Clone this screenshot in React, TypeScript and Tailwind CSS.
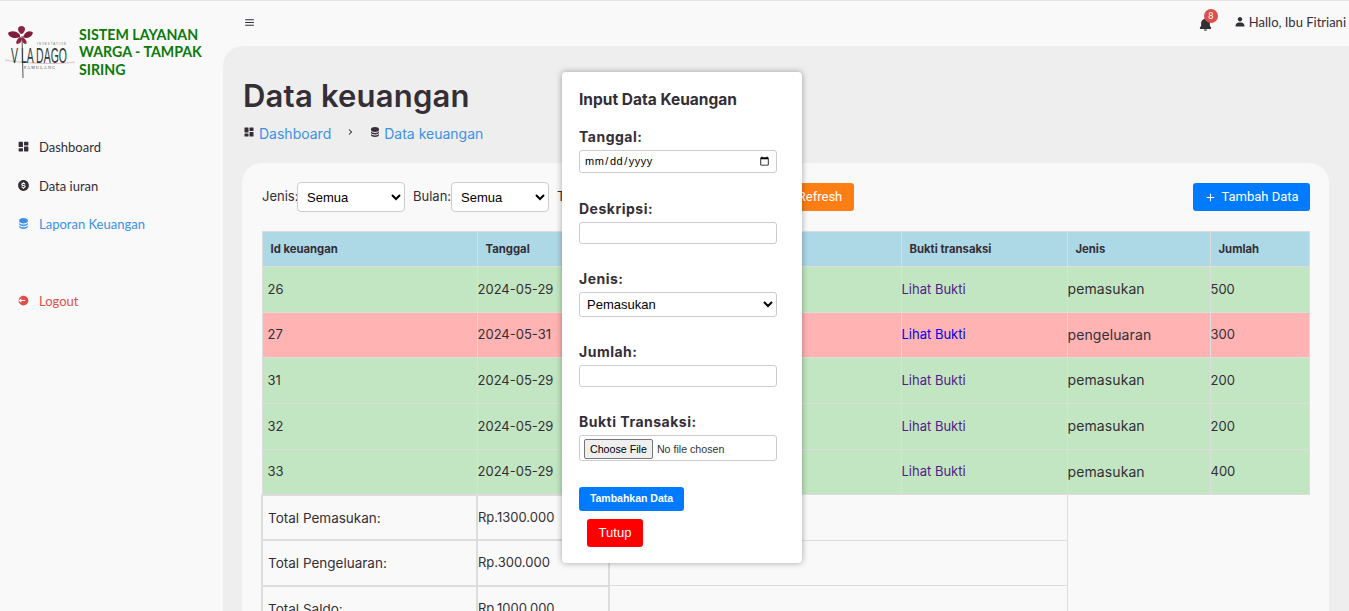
import React from 'react';
import {
  BiMenu,
  BiPlus,
  BiChevronRight,
  BiSolidBell,
  BiSolidData,
  BiSolidDashboard,
  BiSolidDollarCircle,
  BiSolidLogOutCircle,
  BiSolidUser,
} from 'react-icons/bi';

const rows = [
  { id: 26, date: '2024-05-29', type: 'pemasukan', amount: 500 },
  { id: 27, date: '2024-05-31', type: 'pengeluaran', amount: 300 },
  { id: 31, date: '2024-05-29', type: 'pemasukan', amount: 200 },
  { id: 32, date: '2024-05-29', type: 'pemasukan', amount: 200 },
  { id: 33, date: '2024-05-29', type: 'pemasukan', amount: 400 },
];

const totals = [
  { label: 'Total Pemasukan:', value: 'Rp.1300.000' },
  { label: 'Total Pengeluaran:', value: 'Rp.300.000' },
  { label: 'Total Saldo:', value: 'Rp.1000.000' },
];

const heads = ['Id keuangan', 'Tanggal', 'Deskripsi', 'Bukti transaksi', 'Jenis', 'Jumlah'];

function Logo() {
  return (
    <svg width="71" height="56" viewBox="0 0 71 56" className="shrink-0">
      <path d="M17 12 L18 54" stroke="#55504f" strokeWidth="1" />
      <path d="M15 11 C11 6 5 7 3 9 C4 14 10 15 15 13 Z" fill="#7d1f3c" />
      <path d="M19 11 C22 6 27 7 28 9 C26 14 21 15 18 13 Z" fill="#7d1f3c" />
      <path d="M13 5 C13 1 20 1 20 5 C20 8 17 10 16.500 10 C16 10 13 8 13 5 Z" fill="#8c2443" />
      <path d="M15 13 C12 15 10 19 12 20 C15 20 17 17 17 14 Z" fill="#8c2443" />
      <path d="M18 13 C20 15 23 18 21 20 C18 20 17 17 17 14 Z" fill="#8c2443" />
      <path d="M0 36 C15 39 50 41 70 38" stroke="#c9a3a8" strokeWidth="0.7" fill="none" />
      <text x="32" y="21" fontSize="3" fill="#777" textLength="29" fontFamily="Liberation Sans">INVESTATION</text>
      <text x="6" y="39" fontSize="22" fill="#2f3b3d" textLength="56" lengthAdjust="spacingAndGlyphs" fontFamily="Liberation Sans">V LA DAGO</text>
      <text x="19" y="45" fontSize="4" fill="#444" textLength="31" fontFamily="Liberation Serif">PAMULANG</text>
    </svg>
  );
}

function Field({ label, gap, children }: { label: string; gap: string; children: React.ReactNode }) {
  return (
    <div className={gap}>
      <label className="block h-[20px] mb-[4px] text-[14px] leading-[22px] font-bold tracking-[0.5px]">{label}</label>
      {children}
    </div>
  );
}

const inputClass = 'block w-[198px] rounded-[3px] border border-[#ccc] bg-white';

export default function App() {
  return (
    <div className="relative flex h-screen overflow-hidden border-t border-[#e3e3e3] bg-[#f9f9f9] text-[#342e37] font-['Inter',sans-serif]">
      {/* sidebar */}
      <aside className="w-[223px] shrink-0 font-['Lato',sans-serif]">
        <div className="flex items-start pl-[5px] pr-[4px] pt-[23px]">
          <Logo />
          <div className="pl-[3px] pt-[2px] text-[14.2px] leading-[17.3px] font-bold text-[#0a7a0a]">
            SISTEM LAYANAN
            <br />
            WARGA - TAMPAK
            <br />
            SIRING
          </div>
        </div>
        <ul className="mt-[58px] pl-[17px] text-[13px]">
          <li className="flex h-[20px] items-center gap-[9px]">
            <BiSolidDashboard className="-mt-[3px] h-[13px] w-[13px]" /> Dashboard
          </li>
          <li className="mt-[19px] flex h-[20px] items-center gap-[9px]">
            <BiSolidDollarCircle className="-mt-[3px] h-[13px] w-[13px]" /> Data iuran
          </li>
          <li className="mt-[18px] flex h-[20px] items-center gap-[9px] text-[#3c91e6]">
            <BiSolidData className="-mt-[3px] h-[13px] w-[13px]" /> Laporan Keuangan
          </li>
          <li className="mt-[57px] flex h-[20px] items-center gap-[9px] text-[#db504a]">
            <BiSolidLogOutCircle className="-mt-[3px] h-[13px] w-[13px]" /> Logout
          </li>
        </ul>
      </aside>

      <div className="flex min-w-0 flex-1 flex-col">
        {/* top nav */}
        <nav className="flex h-[45px] shrink-0 items-center pb-[2px] pl-[20px] pr-[3px] font-['Lato',sans-serif] text-[13px]">
          <BiMenu className="h-[13px] w-[13px]" />
          <div className="relative ml-auto mr-[21px] mt-[3px]">
            <BiSolidBell className="h-[15px] w-[15px]" />
            <span className="absolute -right-[5px] -top-[8px] flex h-[14px] w-[14px] items-center justify-center rounded-full bg-[#db504a] text-[9px] text-white">
              8
            </span>
          </div>
          <BiSolidUser className="-mt-[2px] mr-[3px] h-[12px] w-[12px]" />
          <span>Hallo, Ibu Fitriani</span>
        </nav>

        {/* main */}
        <main className="flex-1 rounded-tl-[20px] bg-[#eee] pl-[19px] pr-[20px] pt-[30px]">
          <h1 className="ml-[1px] text-[31px] leading-[40px] font-semibold tracking-[0.2px]">Data keuangan</h1>
          <div className="ml-[1px] mt-[7px] flex h-[20px] items-center text-[14px] text-[#3c91e6]">
            <BiSolidDashboard className="-mt-[2px] mr-[4px] h-[12px] w-[12px] text-[#342e37]" />
            Dashboard
            <BiChevronRight className="mx-[13px] -mt-[2px] h-[12px] w-[12px] text-[#342e37]" />
            <BiSolidData className="-mt-[2px] mr-[3px] h-[12px] w-[12px] text-[#342e37]" />
            Data keuangan
          </div>

          <div className="mt-[20px] rounded-[20px] bg-[#f9f9f9] pl-[19px] pr-[19px] pt-[19px] pb-[24px]">
            <div className="flex h-[30px] items-center text-[13px]">
              <span className="ml-[1px] w-[35px]">Jenis:</span>
              <select className="h-[30px] w-[108px] rounded-[4px] border border-[#ccc] bg-white pl-[5px] font-['Liberation_Sans',sans-serif] text-[13px] text-black">
                <option>Semua</option>
              </select>
              <span className="ml-[8px] w-[38px]">Bulan:</span>
              <select className="h-[30px] w-[98px] rounded-[4px] border border-[#ccc] bg-white pl-[5px] font-['Liberation_Sans',sans-serif] text-[13px] text-black">
                <option>Semua</option>
              </select>
              <span className="ml-[8px]">Tahun:</span>
              <button className="ml-[188px] h-[28px] w-[67px] rounded-[3px] bg-[#fd7e14] text-center font-['Roboto',sans-serif] text-[13px] text-white">
                Refresh
              </button>
              <button className="ml-auto flex h-[28px] w-[117px] items-center justify-center gap-[4px] rounded-[3px] bg-[#007bff] font-['Roboto',sans-serif] text-[13px] text-white">
                <BiPlus className="h-[13px] w-[13px]" /> Tambah Data
              </button>
            </div>

            <table className="mt-[19px] w-[1047px] table-fixed border-collapse text-[13px]">
              <colgroup>
                <col className="w-[215px]" />
                <col className="w-[132px]" />
                <col className="w-[292px]" />
                <col className="w-[166px]" />
                <col className="w-[143px]" />
                <col className="w-[99px]" />
              </colgroup>
              <thead>
                <tr className="bg-[#add8e6]">
                  {heads.map((h) => (
                    <th key={h} className="h-[35px] border border-[#ddd] pl-[8px] text-left text-[11.3px] font-bold">
                      {h}
                    </th>
                  ))}
                </tr>
              </thead>
              <tbody>
                {rows.map((r) => {
                  const isOut = r.type === 'pengeluaran';
                  return (
                    <tr key={r.id} className={isOut ? 'bg-[#ffb3b3]' : 'bg-[#c1e6c1]'}>
                      <td className="h-[45.7px] border border-[#ddd] pl-[5px]">{r.id}</td>
                      <td className="border border-[#ddd]">{r.date}</td>
                      <td className="border border-[#ddd]"></td>
                      <td className={`border border-[#ddd] ${isOut ? 'text-[#0000ee]' : 'text-[#551a8b]'}`}>Lihat Bukti</td>
                      <td className="border border-[#ddd] pb-[2px] text-[14px] tracking-[0.1px]">{r.type}</td>
                      <td className="border border-[#ddd]">{r.amount}</td>
                    </tr>
                  );
                })}
                {totals.map((t) => (
                  <tr key={t.label}>
                    <td className="h-[45.5px] border-2 border-[#ddd] pl-[5px] text-[13.5px]">{t.label}</td>
                    <td className="border-2 border-[#ddd]">{t.value}</td>
                    <td colSpan={2} className="border border-[#ddd]"></td>
                  </tr>
                ))}
              </tbody>
            </table>
          </div>
        </main>
      </div>

      {/* input modal */}
      <div className="absolute left-[562px] top-[71px] h-[491px] w-[240px] rounded-[4px] bg-white px-[17px] pt-[16px] shadow-[0_0_6px_rgba(0,0,0,0.35)]">
        <h2 className="mb-[16px] h-[22px] text-[15.5px] leading-[24px] font-bold">Input Data Keuangan</h2>
        <Field label="Tanggal:" gap="mb-[25px]">
          <input type="date" className={`${inputClass} h-[23px] pl-[4px] pr-[4px] font-['Liberation_Sans',sans-serif] text-[11px] tracking-[0.5px] text-black`} />
        </Field>
        <Field label="Deskripsi:" gap="mb-[24px]">
          <input type="text" className={`${inputClass} h-[22px]`} />
        </Field>
        <Field label="Jenis:" gap="mb-[24px]">
          <select className={`${inputClass} h-[25px] pl-[3px] font-['Liberation_Sans',sans-serif] text-[13px] text-black`}>
            <option>Pemasukan</option>
          </select>
        </Field>
        <Field label="Jumlah:" gap="mb-[24px]">
          <input type="text" className={`${inputClass} h-[22px]`} />
        </Field>
        <Field label="Bukti Transaksi:" gap="mb-[26px]">
          <input
            type="file"
            className={`${inputClass} h-[26px] py-[3px] pl-[4px] font-['Liberation_Sans',sans-serif] text-[10.67px] text-[#333] file:mr-[4px] file:rounded-[2px] file:border file:border-[#767676] file:bg-[#efefef] file:px-[5px] file:py-[1px] file:text-black`}
          />
        </Field>
        <button className="block h-[24px] w-[105px] rounded-[3px] bg-[#007bff] font-['Liberation_Sans',sans-serif] text-[10.5px] font-bold text-white">
          Tambahkan Data
        </button>
        <button className="ml-[8px] mt-[8px] block h-[28px] w-[56px] rounded-[3px] bg-[#ff0000] font-['Liberation_Sans',sans-serif] text-[13px] text-white">
          Tutup
        </button>
      </div>
    </div>
  );
}
